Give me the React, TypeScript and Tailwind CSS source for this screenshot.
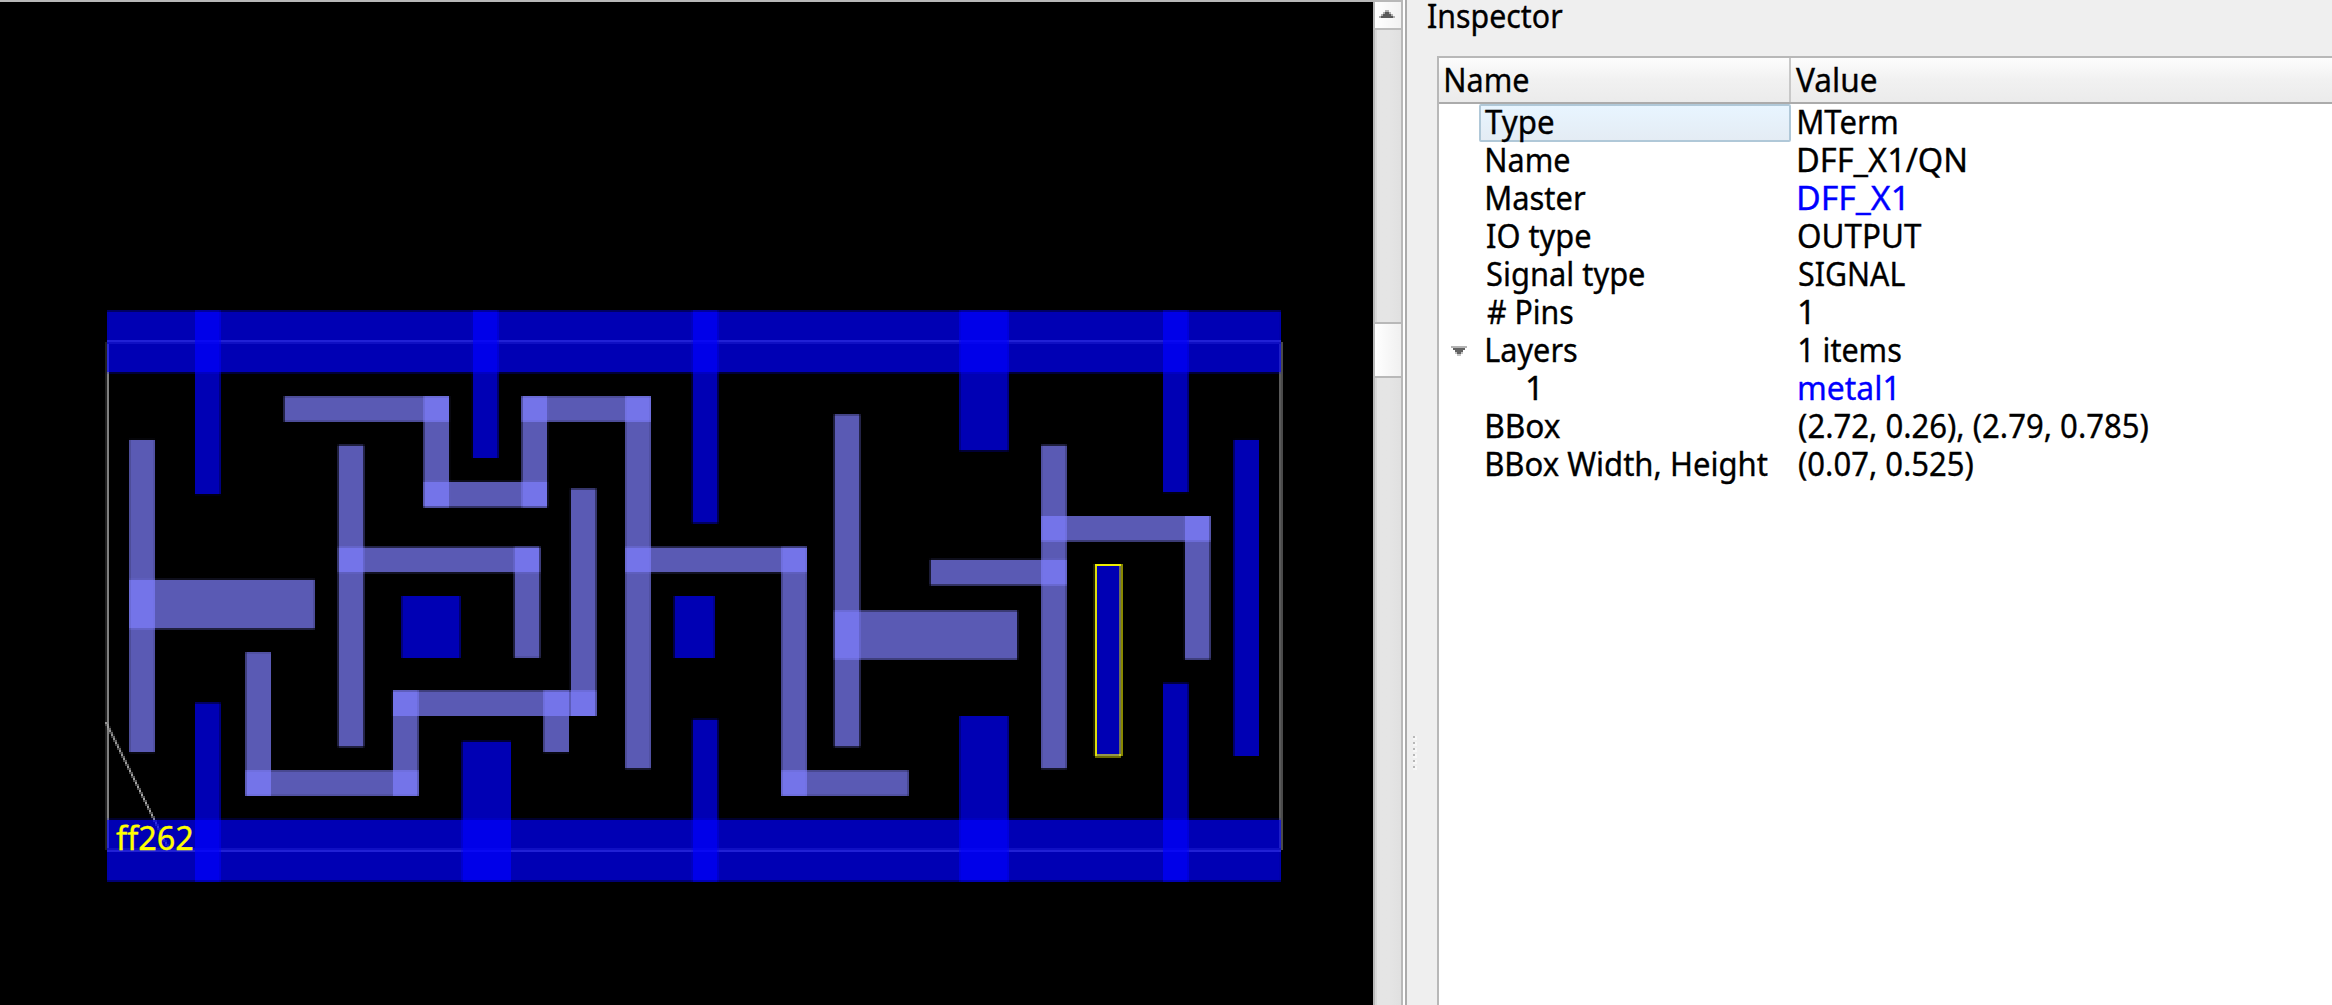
import React, { useLayoutEffect, useRef, useState } from "react";

type Box = [number, number, number, number]; // left, top, right, bottom

const METAL: Box[] = [
  [107.1, 310.9, 1280.9, 372.6],
  [107.1, 819.5, 1280.9, 881.3],
  [195, 310.9, 220.4, 494.2],
  [195, 702.9, 220.4, 881.3],
  [472.8, 310.9, 498.2, 458],
  [692.5, 310.9, 717.9, 523.1],
  [692.5, 719.4, 717.9, 881.3],
  [462, 741.4, 511, 881.3],
  [959.5, 310.9, 1008.5, 450.6],
  [959.5, 716, 1008.5, 881.3],
  [1163, 310.9, 1188.4, 492.2],
  [1163, 683.3, 1188.4, 881.3],
  [1233.8, 439.9, 1259, 756],
  [1095.4, 565, 1120.8, 755.6],
  [401.6, 596, 460.2, 658],
  [674.2, 596, 714.6, 658],
];

const OBSTRUCTION: Box[] = [
  [129.3, 439.9, 154.8, 752.2],
  [129.3, 579.7, 314.7, 628.7],
  [284.2, 396.3, 449.1, 421.7],
  [423.7, 396.3, 449.1, 507.1],
  [423.7, 481.7, 547.2, 507.1],
  [521.8, 396.3, 547.2, 507.1],
  [521.8, 396.3, 650.8, 421.7],
  [625.3, 396.3, 650.8, 768.5],
  [625.3, 547.2, 806.8, 572.4],
  [781.4, 547.2, 806.8, 795.8],
  [781.4, 770.4, 908.6, 795.8],
  [338.3, 445.3, 363.8, 746.7],
  [338.3, 547.2, 539.8, 572.4],
  [514.3, 547.2, 539.8, 657.8],
  [245.6, 652.2, 271, 795.8],
  [245.6, 770.4, 418.4, 795.8],
  [392.9, 690.6, 418.4, 795.8],
  [392.9, 690.6, 596.2, 716],
  [570.8, 488.8, 596.2, 716],
  [543.5, 690.6, 569, 752.2],
  [834.3, 414.5, 859.8, 746.7],
  [834.3, 610.7, 1017.4, 659.4],
  [1041.2, 445.3, 1066.6, 768.5],
  [1041.2, 516, 1210.2, 541.3],
  [1184.8, 516, 1210.2, 659.4],
  [930.4, 559.7, 1066.6, 585.1],
];

// Splits a span into device cells (2px wide, phase `off`) with their coverage.
function cells(a: number, b: number, off: number) {
  const snap = (v: number) => Math.floor((v - off) / 2) * 2 + off;
  const s = snap(a);
  const e = snap(b);
  const out: [number, number, number][] = [];
  const inner = a > s ? s + 2 : s;
  if (a > s) out.push([s, 2, (s + 2 - a) / 2]);
  out.push([inner, e - inner, 1]);
  if (b > e) out.push([e, 2, (b - e) / 2]);
  return out;
}

function Shape({ box, fill }: { box: Box; fill: string }) {
  const [l, t, r, b] = box;
  return (
    <>
      {cells(l, r, 1).flatMap(([x, w, cx]) =>
        cells(t, b, 0).map(([y, h, cy]) => (
          <rect key={`${x}-${y}`} x={x} y={y} width={w} height={h} fill={fill} fillOpacity={0.706 * cx * cy} />
        ))
      )}
    </>
  );
}

function Diagonal() {
  const rows = Array.from({ length: 64 }, (_, i) => i);
  return (
    <>
      {rows.map((i) => {
        const x = 105.3 + i * 0.992;
        const s = Math.floor((x - 1) / 2) * 2 + 1;
        const f = (x - s) / 2;
        return (
          <g key={i} fill="#a8a8a8">
            <rect x={s} y={722 + i * 2} width={2} height={2} fillOpacity={1 - f} />
            <rect x={s + 2} y={722 + i * 2} width={2} height={2} fillOpacity={f} />
          </g>
        );
      })}
    </>
  );
}

function Layout() {
  return (
    <svg width="1373" height="1003" viewBox="0 2 1373 1003" shapeRendering="crispEdges" className="block">
      <rect x="105" y="342" width="2" height="508" fill="#202020" />
      <rect x="107" y="342" width="2" height="508" fill="#808080" />
      <rect x="1279" y="342" width="2" height="508" fill="#5a5a5a" />
      <rect x="1281" y="342" width="2" height="508" fill="#4a4a4a" />
      <rect x="107" y="340" width="1174" height="2" fill="#707070" />
      <rect x="107" y="342" width="1174" height="2" fill="#343434" />
      <rect x="107" y="848" width="1174" height="2" fill="#343434" />
      <rect x="107" y="850" width="1174" height="2" fill="#707070" />
      <Diagonal />
      {METAL.map((b, i) => (
        <Shape key={i} box={b} fill="#0000ff" />
      ))}
      {OBSTRUCTION.map((b, i) => (
        <Shape key={i} box={b} fill="#8080ff" />
      ))}
      <rect x="1093" y="564" width="2" height="192" fill="#232300" />
      <rect x="1095" y="564" width="2" height="192" fill="#dcdc10" />
      <rect x="1095" y="564" width="26" height="2" fill="#eeee00" />
      <rect x="1119" y="566" width="2" height="190" fill="#70705c" />
      <rect x="1121" y="564" width="2" height="192" fill="#888800" />
      <rect x="1097" y="754" width="22" height="2" fill="#96964a" />
      <rect x="1119" y="754" width="2" height="2" fill="#c8c830" />
      <rect x="1095" y="756" width="26" height="2" fill="#6a6a00" />
    </svg>
  );
}

// One line of text whose ink starts at the box's left edge and spans `ink` pixels.
function Label({ text, ink, className = "mt-px" }: { text: string; ink: number; className?: string }) {
  const ref = useRef<HTMLSpanElement>(null);
  const [transform, setTransform] = useState("none");
  useLayoutEffect(() => {
    const ctx = document.createElement("canvas").getContext("2d");
    if (!ctx || !ref.current) return;
    const cs = getComputedStyle(ref.current);
    ctx.font = `${cs.fontWeight} ${cs.fontSize} ${cs.fontFamily}`;
    const m = ctx.measureText(text);
    const k = ink / (m.actualBoundingBoxRight + m.actualBoundingBoxLeft);
    setTransform(`scaleX(${k}) translateX(${m.actualBoundingBoxLeft}px)`);
  }, [text, ink]);
  return (
    <span
      ref={ref}
      className={`block w-max origin-left whitespace-pre [-webkit-text-stroke:0.35px_currentColor] ${className}`}
      style={{ transform }}
    >
      {text}
    </span>
  );
}

interface Row {
  name: string;
  nameInk: number;
  value: string;
  valueInk: number;
  link?: boolean;
  kind?: "selected" | "parent" | "child";
}

const ROWS: Row[] = [
  { name: "Type", nameInk: 68, value: "MTerm", valueInk: 98, kind: "selected" },
  { name: "Name", nameInk: 82, value: "DFF_X1/QN", valueInk: 166 },
  { name: "Master", nameInk: 99, value: "DFF_X1", valueInk: 104, link: true },
  { name: "IO type", nameInk: 103, value: "OUTPUT", valueInk: 122 },
  { name: "Signal type", nameInk: 157, value: "SIGNAL", valueInk: 106 },
  { name: "# Pins", nameInk: 86, value: "1", valueInk: 10 },
  { name: "Layers", nameInk: 90, value: "1 items", valueInk: 102, kind: "parent" },
  { name: "1", nameInk: 10, value: "metal1", valueInk: 95, link: true, kind: "child" },
  { name: "BBox", nameInk: 73, value: "(2.72, 0.26), (2.79, 0.785)", valueInk: 349 },
  { name: "BBox Width, Height", nameInk: 281, value: "(0.07, 0.525)", valueInk: 174 },
];

function TreeRow({ row }: { row: Row }) {
  return (
    <div className="flex h-[38px] leading-[34px]">
      <div className="flex w-10 shrink-0 justify-center">
        {row.kind === "parent" && (
          <svg width="16" height="10" className="mt-[14px]" shapeRendering="crispEdges">
            <path d="M0 0h16v2h-16z" fill="#b4b4b4" />
            <path d="M2 2h12v2h-2v2h-2v2h-4v-2h-2v-2h-2z" fill="#636363" />
            <path d="M6 8h4v2h-4zM4 6h2v2h-2zM10 6h2v2h-2z" fill="#c4c4c4" />
          </svg>
        )}
      </div>
      <div
        className={
          row.kind === "selected"
            ? "h-[38px] w-[312px] shrink-0 rounded-[2px] border-2 border-[#b0c8d8] bg-linear-to-b from-[#e8f5ff] to-[#e4ecf4] pl-1"
            : row.kind === "child"
              ? "w-[312px] shrink-0 pl-12"
              : "w-[312px] shrink-0 pl-2"
        }
      >
        <Label text={row.name} ink={row.nameInk} className={row.kind === "selected" ? "-mt-px" : "mt-px"} />
      </div>
      <div className={row.link ? "pl-2 text-[#0000ff]" : "pl-2"}>
        <Label text={row.value} ink={row.valueInk} />
      </div>
    </div>
  );
}

export default function App() {
  return (
    <div className="flex h-[1005px] w-[2332px] overflow-hidden bg-[#efefef] font-['Noto_Sans',sans-serif] text-[33px] leading-[34px] text-black">
      <main className="relative w-[1373px] shrink-0 border-t-2 border-[#b8b8b8] bg-black">
        <Layout />
        <div className="absolute top-[818px] left-[116px] text-[#ffff00]">
          <Label text="ff262" ink={77} />
        </div>
      </main>

      <div className="flex w-[30px] shrink-0 flex-col border-x-2 border-t-2 border-[#b8b8b8]">
        <div className="flex h-7 shrink-0 justify-center border-b-2 border-[#bcbcbc] bg-linear-to-r from-white to-[#f2f2f2]">
          <svg width="16" height="8" className="mt-2 -ml-0.5" shapeRendering="crispEdges">
            <path d="M6 0h4v2h-4zM4 2h8v2h-8zM2 4h12v2h-12zM0 6h16v2h-16z" fill="#b0b0b0" />
            <path d="M6 2h4v2h2v2h2v2h-12v-2h2v-2h2z" fill="#5a5a5a" />
          </svg>
        </div>
        <div className="h-[292px] shrink-0 border-l-2 border-[#d8d8d8] bg-linear-to-r from-[#e5e5e5] via-[#e5e5e5] to-[#e0e0e0]" />
        <div className="h-14 shrink-0 border-y-2 border-[#b8b8b8] bg-linear-to-r from-white to-[#f0f0f0]" />
        <div className="grow border-l-2 border-[#d8d8d8] bg-linear-to-r from-[#e5e5e5] via-[#e5e5e5] to-[#e0e0e0]" />
      </div>

      <div className="w-0.5 shrink-0 bg-white" />
      <div className="w-0.5 shrink-0 bg-[#ababab]" />

      <div className="flex w-[30px] shrink-0 flex-col gap-0.5 pt-[736px] pl-1.5">
        {[0, 1, 2, 3, 4, 5].map((i) => (
          <div key={i} className="size-1 shrink-0 bg-[#f7f7f7]">
            <div className="size-0.5 bg-[#b8b8b8]" />
          </div>
        ))}
      </div>

      <section className="-ml-[9px] flex min-w-0 grow flex-col">
        <div className="flex h-14 shrink-0 items-start leading-8">
          <Label text="Inspector" ink={135} className="mt-0" />
        </div>
        <div className="ml-[9px] grow border-t-2 border-l-2 border-[#b8b8b8] bg-white">
          <div className="flex h-[46px] border-b-2 border-[#ababab] bg-linear-to-b from-[#fdfdfd] via-[#f1f1f1] to-[#ebebeb]">
            <div className="w-[352px] shrink-0 border-r-2 border-[#c8c8c8] pt-1 pl-[7px]">
              <Label text="Name" ink={82} />
            </div>
            <div className="pt-1 pl-[4.5px]">
              <Label text="Value" ink={80} />
            </div>
          </div>
          {ROWS.map((row) => (
            <TreeRow key={row.name} row={row} />
          ))}
        </div>
      </section>
    </div>
  );
}
